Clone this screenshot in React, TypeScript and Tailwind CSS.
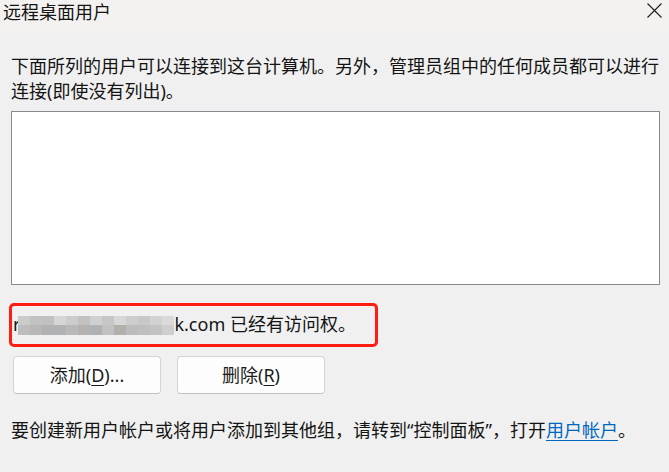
import React from 'react';

// pixelated cover over the e-mail address, two rows of grey tiles
const maskTop = ['#cbcbcb', '#c2c2c2', '#c0c0c0', '#d6d6d6', '#cccccc', '#c4c2c0', '#d0d0d0', '#c6c6c6', '#d7d7d7', '#cdcdcd', '#c8c8c8', '#d2d2d2', '#dadada'];
const maskBottom = ['#bdbdbd', '#b8b8b8', '#b2b2b2', '#afb3b5', '#b9b9b9', '#b5b2b0', '#aeb2b4', '#c1c1c1', '#b3b0ac', '#bcbcbc', '#bfbfbf', '#c3c3c3', '#cecece'];

function CloseIcon() {
  return (
    <svg width="15" height="15" viewBox="0 0 15 15" className="text-[#1b1b1b]">
      <path d="M0.5 0.5 L14.5 14.5 M14.5 0.5 L0.5 14.5" stroke="currentColor" strokeWidth="1.1" fill="none" />
    </svg>
  );
}

function Mask() {
  return (
    <div className="flex flex-col w-[156px] h-[19px] mt-[1px] -ml-[2px]">
      <div className="flex h-[9px]">
        {maskTop.map((c, i) => (
          <div key={i} className="flex-1" style={{ background: c }} />
        ))}
      </div>
      <div className="flex h-[10px]">
        {maskBottom.map((c, i) => (
          <div key={i} className="flex-1" style={{ background: c }} />
        ))}
      </div>
    </div>
  );
}

function DialogButton({ label, hotkey, tail }: { label: string; hotkey: string; tail: string }) {
  return (
    <button className="w-[148px] h-[38px] bg-[#fdfdfd] border border-[#d4d4d4] border-b-[#c2c2c2] rounded-[4px] text-[18px] leading-[25px] text-[#1b1b1b] flex items-center justify-center">
      <span>
        {label}(<span className="underline underline-offset-[3px]">{hotkey}</span>){tail}
      </span>
    </button>
  );
}

export default function App() {
  return (
    <div
      className="w-[669px] h-[472px] bg-[#f0f0f0] text-[#141414] overflow-hidden"
      style={{ fontFamily: '"Noto Sans", "Noto Sans CJK SC", sans-serif' }}
    >
      {/* title bar */}
      <div className="h-[32px] bg-[#f3f2f0] flex items-start justify-between pl-[3px] pr-[7px]">
        <span className="text-[18px] leading-[24px]">远程桌面用户</span>
        <div className="pt-[3px]">
          <CloseIcon />
        </div>
      </div>

      <div className="pl-[11px] pr-[9px] pt-[22px]">
        <p className="text-[18px] leading-[25px] whitespace-nowrap">
          下面所列的用户可以连接到这台计算机。另外，管理员组中的任何成员都可以进行
          <br />
          连接(即使没有列出)。
        </p>

        {/* user list */}
        <div className="mt-[7px] h-[174px] bg-white border border-[#858991]" />

        {/* current user line */}
        <div className="relative mt-[27px] h-[25px] pl-[2px] flex items-center text-[18px] leading-[25px] whitespace-nowrap">
          <span>r</span>
          <Mask />
          <span>k.com 已经有访问权。</span>
          <div className="absolute -left-[2px] -top-[9px] w-[369px] h-[44px] border-[3px] border-[#ff1c10] rounded-[5px]" />
        </div>

        <div className="mt-[19px] pl-[2px] flex gap-[16px]">
          <DialogButton label="添加" hotkey="D" tail="..." />
          <DialogButton label="删除" hotkey="R" tail="" />
        </div>

        <p className="mt-[24px] text-[18px] leading-[25px] whitespace-nowrap">
          要创建新用户帐户或将用户添加到其他组，请转到“控制面板”，打开
          <a className="text-[#0067c0] underline underline-offset-[3px]">用户帐户</a>。
        </p>
      </div>
    </div>
  );
}
